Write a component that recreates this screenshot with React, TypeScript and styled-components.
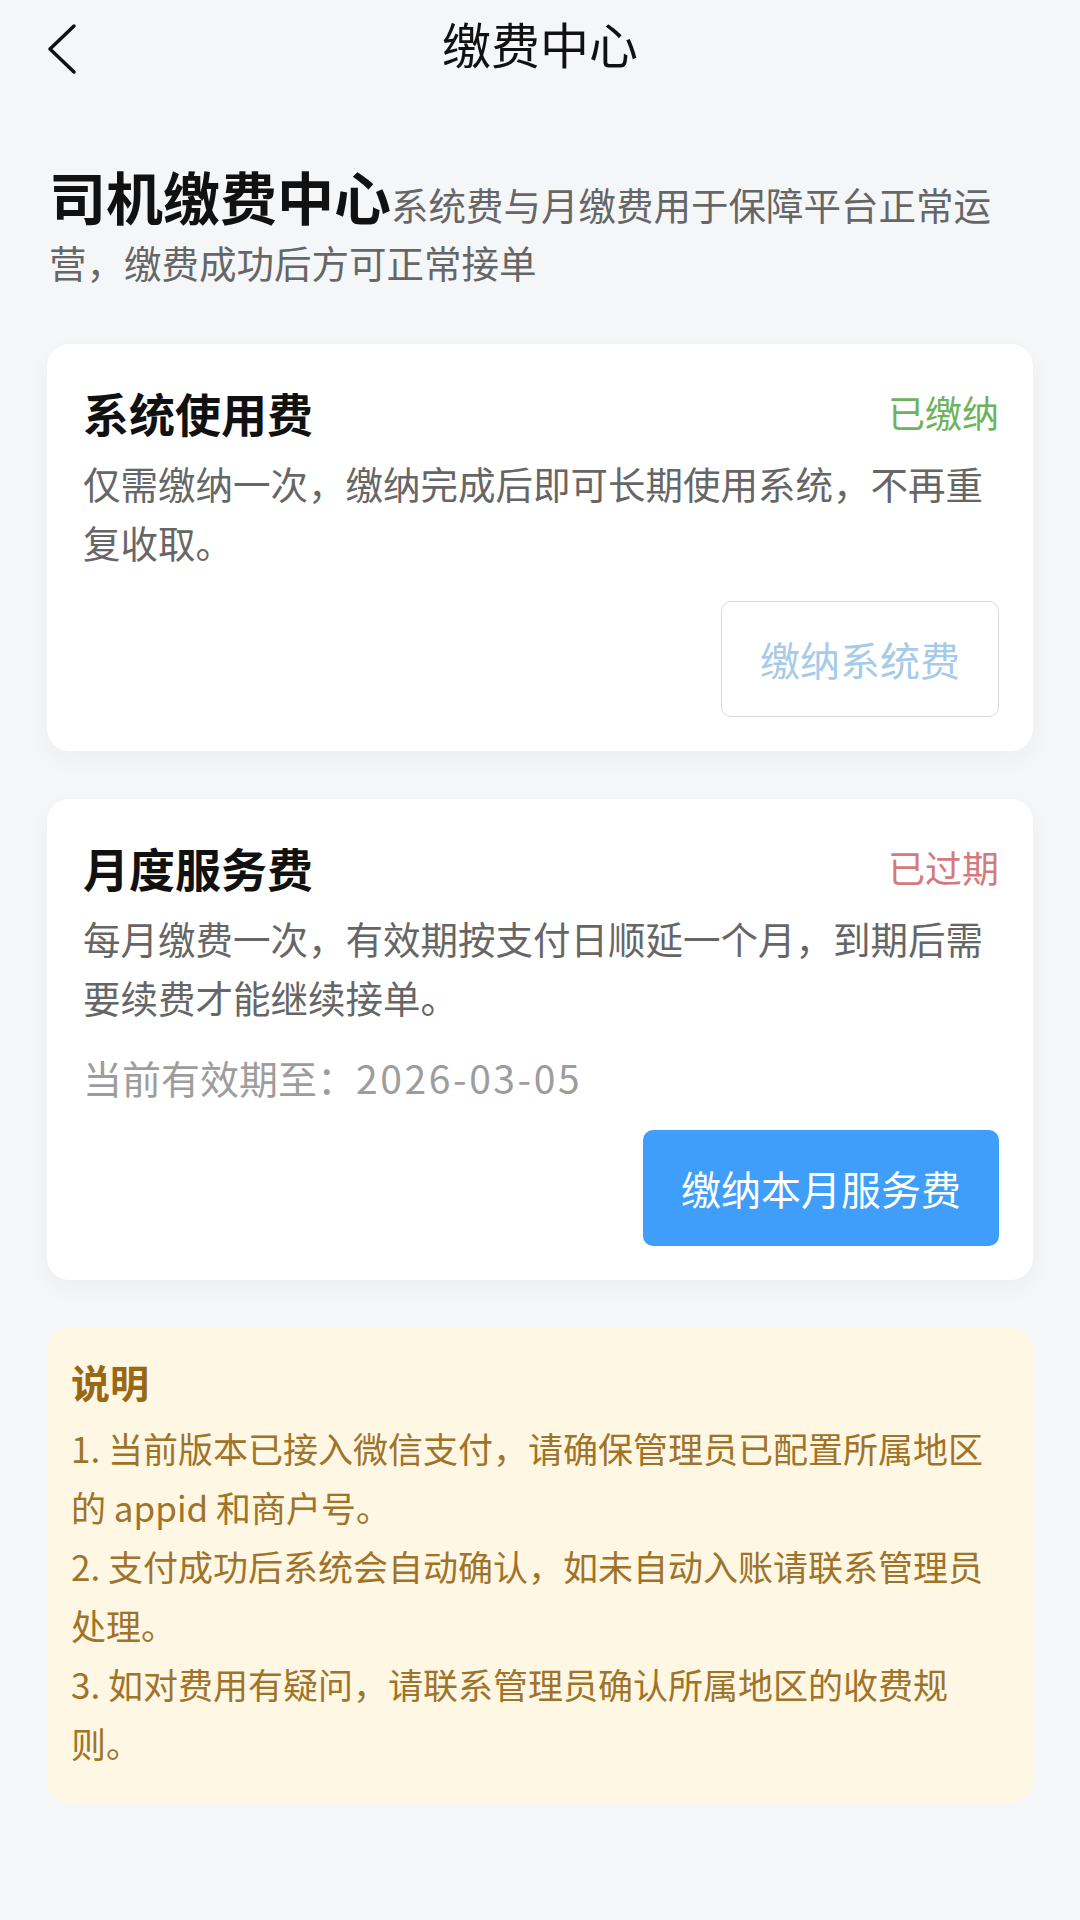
import styled, { createGlobalStyle } from 'styled-components';

const GlobalStyle = createGlobalStyle`
  html, body {
    margin: 0;
    padding: 0;
    background: #f5f6f8;
  }
  body {
    font-family: 'Noto Sans CJK SC', 'Noto Sans', sans-serif;
    color: #1a1a1a;
  }
  * {
    box-sizing: border-box;
  }
`;

const Page = styled.div`
  width: 1080px;
  min-height: 1920px;
  background: #f5f6f8;
`;

const NavBar = styled.header`
  display: grid;
  grid-template-columns: 1fr auto 1fr;
  align-items: center;
  height: 98px;
  padding: 0 46px;
`;

const BackButton = styled.svg`
  justify-self: start;
  display: block;
`;

const NavTitle = styled.h1`
  margin: 0 0 12px;
  font-size: 49px;
  font-weight: 400;
  line-height: 60px;
  color: #111;
`;

const Content = styled.main`
  padding: 0 47px;
`;

const Intro = styled.p`
  margin: 69px 0 53px;
  padding: 0 30px 0 2px;
  font-size: 37.5px;
  line-height: 58px;
  color: #666;
`;

const IntroTitle = styled.span`
  display: inline-block;
  font-size: 57px;
  line-height: 56px;
  font-weight: 700;
  color: #111;
`;

const Card = styled.section`
  display: flex;
  flex-direction: column;
  background: #fff;
  border-radius: 22px;
  padding: 40px 34px 34px 36px;
  margin-bottom: 48px;
  box-shadow: 0 8px 24px rgba(30, 40, 60, 0.04);
`;

const CardHead = styled.div`
  display: flex;
  justify-content: space-between;
  align-items: center;
  margin-bottom: 13px;
`;

const CardTitle = styled.h2`
  margin: 0;
  font-size: 46px;
  line-height: 56px;
  font-weight: 700;
  color: #111;
`;

const Status = styled.span<{ tone: 'ok' | 'late' }>`
  font-size: 37px;
  line-height: 56px;
  color: ${({ tone }) => (tone === 'ok' ? '#6db35c' : '#d27a7e')};
`;

const CardText = styled.p`
  margin: 0;
  font-size: 37.5px;
  line-height: 59px;
  color: #666;
`;

const Expiry = styled.p`
  margin: 22px 0 0;
  font-size: 39px;
  line-height: 59px;
  color: #9d9d9d;
`;

const ExpiryDate = styled.span`
  letter-spacing: 2.6px;
`;

const Actions = styled.div<{ gap: number }>`
  display: flex;
  justify-content: flex-end;
  margin-top: ${({ gap }) => gap}px;
`;

const PayButton = styled.button<{ primary?: boolean }>`
  height: 116px;
  padding: 0 38px;
  border-radius: 10px;
  font-family: inherit;
  font-size: 40px;
  cursor: pointer;
  border: ${({ primary }) => (primary ? 'none' : '1.5px solid #d5d9de')};
  background: ${({ primary }) => (primary ? '#409efb' : '#fff')};
  color: ${({ primary }) => (primary ? '#fff' : '#a6cbe8')};
`;

const Notice = styled.section`
  background: #fef7e4;
  border-radius: 22px;
  padding: 28px 30px 31px 24px;
  color: #a07328;
`;

const NoticeTitle = styled.h3`
  margin: 0 0 12px;
  font-size: 39px;
  line-height: 50px;
  font-weight: 700;
  color: #986814;
`;

const NoticeItem = styled.p`
  margin: 0;
  font-size: 35px;
  line-height: 59px;
`;

const notes = [
  '1. 当前版本已接入微信支付，请确保管理员已配置所属地区的 appid 和商户号。',
  '2. 支付成功后系统会自动确认，如未自动入账请联系管理员处理。',
  '3. 如对费用有疑问，请联系管理员确认所属地区的收费规则。',
];

export default function App(): JSX.Element {
  return (
    <Page>
      <GlobalStyle />
      <NavBar>
        <BackButton width='32' height='52' viewBox='0 0 32 52' fill='none'>
          <path d='M28 3 L4 26 L28 49' stroke='#111' strokeWidth='3.5' strokeLinecap='round' strokeLinejoin='round' />
        </BackButton>
        <NavTitle>缴费中心</NavTitle>
        <span />
      </NavBar>
      <Content>
        <Intro>
          <IntroTitle>司机缴费中心</IntroTitle>
          系统费与月缴费用于保障平台正常运营，缴费成功后方可正常接单
        </Intro>

        <Card>
          <CardHead>
            <CardTitle>系统使用费</CardTitle>
            <Status tone='ok'>已缴纳</Status>
          </CardHead>
          <CardText>仅需缴纳一次，缴纳完成后即可长期使用系统，不再重复收取。</CardText>
          <Actions gap={30}>
            <PayButton>缴纳系统费</PayButton>
          </Actions>
        </Card>

        <Card>
          <CardHead>
            <CardTitle>月度服务费</CardTitle>
            <Status tone='late'>已过期</Status>
          </CardHead>
          <CardText>每月缴费一次，有效期按支付日顺延一个月，到期后需要续费才能继续接单。</CardText>
          <Expiry>
            当前有效期至：<ExpiryDate>2026-03-05</ExpiryDate>
          </Expiry>
          <Actions gap={23}>
            <PayButton primary>缴纳本月服务费</PayButton>
          </Actions>
        </Card>

        <Notice>
          <NoticeTitle>说明</NoticeTitle>
          {notes.map(note => (
            <NoticeItem key={note}>{note}</NoticeItem>
          ))}
        </Notice>
      </Content>
    </Page>
  );
}
